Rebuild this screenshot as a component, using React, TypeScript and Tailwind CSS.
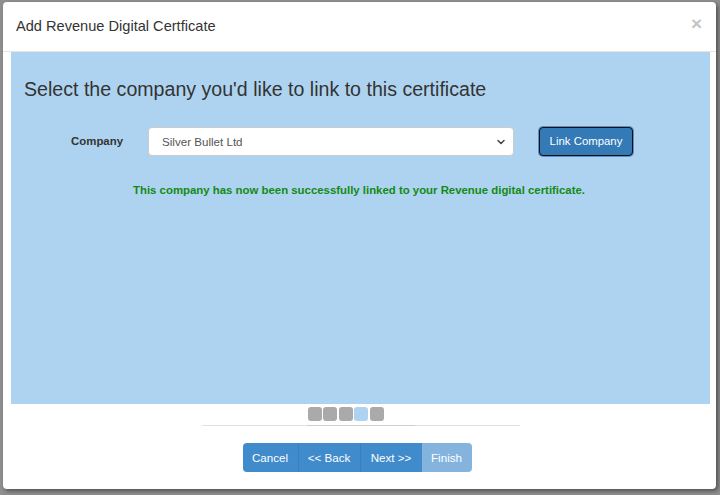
import React from 'react';

const font = { fontFamily: '"Liberation Sans", Arial, sans-serif' };

const steps = ['done', 'done', 'done', 'current', 'todo'];

export default function App() {
  return (
    <div className="w-[720px] h-[495px] bg-[#8f8f8f] pt-[2px] pl-[3px] overflow-hidden" style={font}>
      <div className="w-[713px] h-[487px] bg-white rounded-[4px] shadow-[2px_2px_4px_rgba(0,0,0,0.45)] flex flex-col">
        {/* header */}
        <div className="h-[50px] border-b border-[#e5e5e5] flex items-center justify-between pl-[13px] pr-[14px] shrink-0">
          <h4 className="text-[14.6px] text-[#333] pt-[1px]">Add Revenue Digital Certficate</h4>
          <span className="text-[19px] font-bold text-[#c4c4c4] leading-none -mt-[6px]">×</span>
        </div>

        {/* body */}
        <div className="pl-[8px] pr-[6px]">
          <div className="h-[352px] bg-[#aed3f0] px-[13px] pt-[24px]">
            <h3 className="text-[19.6px] text-[#333] leading-[26px]">
              Select the company you'd like to link to this certificate
            </h3>
            <div className="flex items-center mt-[25px]">
              <label className="w-[99px] text-right text-[11.4px] font-bold text-[#333]">Company</label>
              <div className="ml-[25px] w-[366px] h-[29px] bg-white border border-[#ccc] rounded-[4px] flex items-center justify-between pl-[13px] pr-[7px]">
                <span className="text-[11.6px] text-[#555]">Silver Bullet Ltd</span>
                <svg width="10" height="10" viewBox="0 0 10 10" fill="none">
                  <path d="M2 3.5L5 6.5L8 3.5" stroke="#444" strokeWidth="1.5" strokeLinecap="round" strokeLinejoin="round" />
                </svg>
              </div>
              <button className="ml-[25px] w-[94px] h-[29px] bg-[#337ab7] text-white text-[11.4px] rounded-[4px] border border-[#111] ring-1 ring-[#5b8fc4]">
                Link Company
              </button>
            </div>
            <p className="mt-[26px] text-center text-[11.4px] font-bold text-[#138a13] pr-[3px]">
              This company has now been successfully linked to your Revenue digital certificate.
            </p>
          </div>
        </div>

        {/* step indicator */}
        <div className="flex justify-center mt-[3px] pr-[28px]">
          <div className="flex gap-[1.5px]">
            {steps.map((s, i) => (
              <div
                key={i}
                className={
                  s === 'current'
                    ? 'w-[14px] h-[14px] rounded-[3px] bg-[#aed3f0]'
                    : 'w-[14px] h-[14px] rounded-[3px] bg-[#aaaaaa]'
                }
              />
            ))}
          </div>
        </div>
        <div className="ml-[199px] w-[318px] h-[1px] bg-[#e3e3e3] mt-[4px] flex">
          <div className="ml-[105px] w-[108px] h-[1px] bg-[#cfcfcf]" />
        </div>

        {/* wizard buttons */}
        <div className="flex justify-center mt-[17px] pr-[5px]">
          <div className="flex h-[29px] rounded-[4px] overflow-hidden text-[11.6px] text-white">
            <button className="w-[56px] bg-[#3f8bcb] border-r border-[#3a7fbb]">Cancel</button>
            <button className="w-[62px] bg-[#3f8bcb] border-r border-[#3a7fbb]">&lt;&lt; Back</button>
            <button className="w-[61px] bg-[#3f8bcb]">Next &gt;&gt;</button>
            <button className="w-[50px] bg-[#84b4de]">Finish</button>
          </div>
        </div>
      </div>
    </div>
  );
}
